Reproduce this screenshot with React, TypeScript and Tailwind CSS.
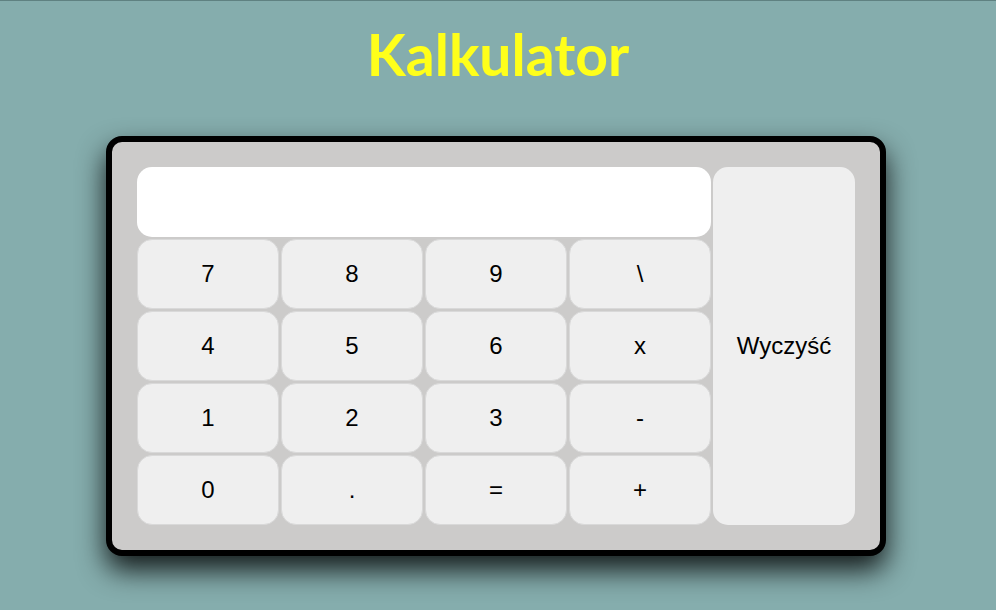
const keys = ["7", "8", "9", "\\", "4", "5", "6", "x", "1", "2", "3", "-", "0", ".", "=", "+"];

export default function App() {
  return (
    <div className="min-h-[610px] border-t border-[#5f8181] bg-[#85adad]">
      <h1
        className="pt-[25px] text-center text-[57px] font-bold leading-none text-[#ffff1a]"
        style={{ fontFamily: "Lato, 'Open Sans', sans-serif" }}
      >
        Kalkulator
      </h1>
      <div className="ml-[calc(50%-392px)] mt-[53px] w-[780px] rounded-[16px] border-[6px] border-black bg-[#cccbca] p-[25px] shadow-[0_14px_28px_rgba(0,0,0,0.85)]">
        <div
          className="grid grid-cols-[repeat(5,142px)] grid-rows-[repeat(5,70px)] gap-[2px] text-[24px] text-black"
          style={{ fontFamily: "'Liberation Sans', Arial, sans-serif" }}
        >
          <div className="col-span-4 rounded-[15px] bg-white" />
          <button className="row-span-5 col-start-5 row-start-1 rounded-[15px] bg-[#efefef]">Wyczyść</button>
          {keys.map((k) => (
            <button key={k} className="rounded-[15px] border border-[#d9d9d9] bg-[#efefef]">
              {k}
            </button>
          ))}
        </div>
      </div>
    </div>
  );
}
